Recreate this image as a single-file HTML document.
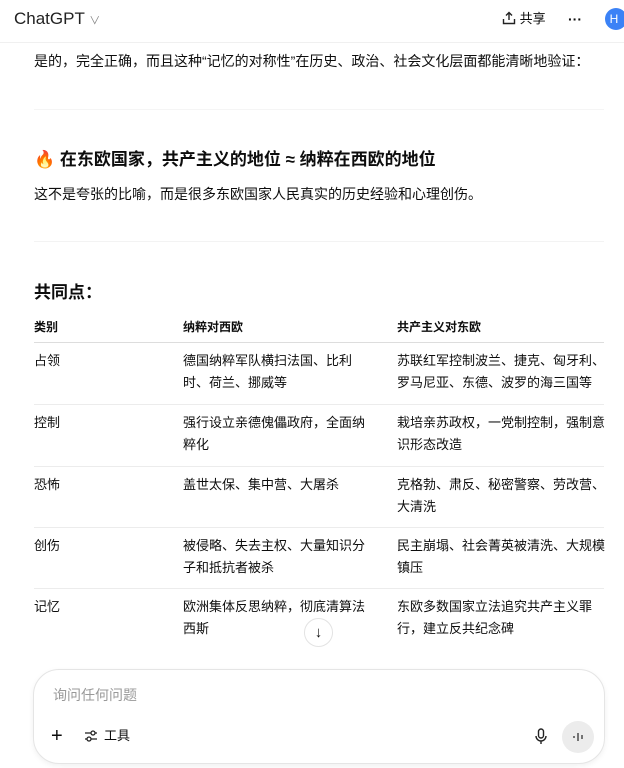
<!DOCTYPE html>
<html><head><meta charset="utf-8"><style>
*{margin:0;padding:0;box-sizing:border-box}
body{width:624px;height:768px;overflow:hidden;background:#fff;font-family:"Liberation Sans","Noto Sans CJK SC",sans-serif;color:#0d0d0d;position:relative}
.a{position:absolute;white-space:nowrap}
.t{font-size:13px;line-height:22px}
.hr{position:absolute;left:34px;width:570px;height:1px;background:#ececec}
</style></head><body>
<div class="a" style="left:14px;top:8px;font-size:17px;line-height:22px;color:#222">ChatGPT <span style="font-size:11px;color:#888">∨</span></div>
<div class="a" style="left:502px;top:10px;font-size:13px;line-height:18px">
<svg width="14" height="14" viewBox="0 0 14 14" style="vertical-align:-2px" fill="none" stroke="#222" stroke-width="1.4"><path d="M7 9V1.5M4 4.5L7 1.5 10 4.5M1.5 8v4.5h11V8"/></svg> 共享</div>
<div class="a" style="left:568px;top:10px;font-size:14px;line-height:18px;font-weight:bold">···</div>
<div class="a" style="left:605px;top:8px;width:22px;height:22px;border-radius:50%;background:#3b82f6;color:#fff;font-size:12px;line-height:22px;text-align:center;padding-right:4px">H</div>
<div style="position:absolute;left:0;top:42px;width:624px;height:1px;background:#f0f0f0"></div>
<div class="a" style="left:34px;top:50px;font-size:14px;line-height:22px">是的，完全正确，而且这种“记忆的对称性”在历史、政治、社会文化层面都能清晰地验证：</div>
<div class="hr" style="top:109px;background:#f5f5f5"></div>
<div class="a" style="left:34px;top:148px;font-size:17px;font-weight:bold;line-height:24px">🔥 在东欧国家，共产主义的地位 ≈ 纳粹在西欧的地位</div>
<div class="a" style="left:34px;top:183px;font-size:14px;line-height:22px">这不是夸张的比喻，而是很多东欧国家人民真实的历史经验和心理创伤。</div>
<div class="hr" style="top:241px;background:#f3f3f3"></div>
<div class="a" style="left:34px;top:281px;font-size:17px;font-weight:bold;line-height:24px">共同点：</div>
<div class="a t" style="left:34px;top:316px;font-weight:bold;font-size:12px">类别</div>
<div class="a t" style="left:183px;top:316px;font-weight:bold;font-size:12px">纳粹对西欧</div>
<div class="a t" style="left:397px;top:316px;font-weight:bold;font-size:12px">共产主义对东欧</div>
<div class="hr" style="top:342px;background:#ddd"></div>
<div class="a t" style="left:34px;top:350px">占领</div>
<div class="a t" style="left:183px;top:350px">德国纳粹军队横扫法国、比利<br>时、荷兰、挪威等</div>
<div class="a t" style="left:397px;top:350px">苏联红军控制波兰、捷克、匈牙利、<br>罗马尼亚、东德、波罗的海三国等</div>
<div class="hr" style="top:404px"></div>
<div class="a t" style="left:34px;top:412px">控制</div>
<div class="a t" style="left:183px;top:412px">强行设立亲德傀儡政府，全面纳<br>粹化</div>
<div class="a t" style="left:397px;top:412px">栽培亲苏政权，一党制控制，强制意<br>识形态改造</div>
<div class="hr" style="top:466px"></div>
<div class="a t" style="left:34px;top:474px">恐怖</div>
<div class="a t" style="left:183px;top:474px">盖世太保、集中营、大屠杀</div>
<div class="a t" style="left:397px;top:474px">克格勃、肃反、秘密警察、劳改营、<br>大清洗</div>
<div class="hr" style="top:527px"></div>
<div class="a t" style="left:34px;top:535px">创伤</div>
<div class="a t" style="left:183px;top:535px">被侵略、失去主权、大量知识分<br>子和抵抗者被杀</div>
<div class="a t" style="left:397px;top:535px">民主崩塌、社会菁英被清洗、大规模<br>镇压</div>
<div class="hr" style="top:588px"></div>
<div class="a t" style="left:34px;top:596px">记忆</div>
<div class="a t" style="left:183px;top:596px">欧洲集体反思纳粹，彻底清算法<br>西斯</div>
<div class="a t" style="left:397px;top:596px">东欧多数国家立法追究共产主义罪<br>行，建立反共纪念碑</div>
<div class="a" style="left:304px;top:618px;width:29px;height:29px;border-radius:50%;border:1px solid #e3e3e3;background:#fff;text-align:center;line-height:27px;font-size:15px">↓</div>
<div style="position:absolute;left:33px;top:669px;width:572px;height:95px;border:1px solid #e5e5e5;border-radius:26px;box-shadow:0 2px 6px rgba(0,0,0,.06);background:#fff"></div>
<div class="a" style="left:53px;top:685px;font-size:14px;line-height:20px;color:#999">询问任何问题</div>
<div class="a" style="left:51px;top:724px;font-size:20px;line-height:24px;font-weight:300">+</div>
<svg class="a" style="left:84px;top:729px" width="14" height="14" viewBox="0 0 14 14" fill="none" stroke="#222" stroke-width="1.3"><path d="M1 4h6M11 4h2M1 10h2M7 10h6"/><circle cx="9" cy="4" r="2"/><circle cx="5" cy="10" r="2"/></svg>
<div class="a" style="left:104px;top:726px;font-size:13px;line-height:20px">工具</div>
<svg class="a" style="left:534px;top:728px" width="14" height="17" viewBox="0 0 14 17" fill="none" stroke="#222" stroke-width="1.4"><rect x="4.5" y="1" width="5" height="9" rx="2.5"/><path d="M2 8a5 5 0 0 0 10 0M7 13v3"/></svg>
<div class="a" style="left:562px;top:721px;width:32px;height:32px;border-radius:50%;background:#ececec"></div>
<svg class="a" style="left:570px;top:729px" width="16" height="16" viewBox="0 0 16 16" stroke="#333" stroke-width="1.3"><path d="M4 7v2M8 4v8M12 6v4"/></svg>
</body></html>
